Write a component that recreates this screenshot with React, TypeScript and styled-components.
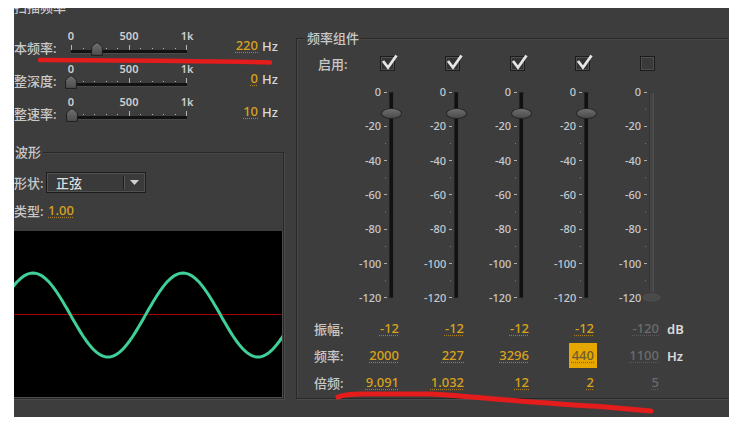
import React from 'react'
import styled, { createGlobalStyle } from 'styled-components'

const GlobalStyle = createGlobalStyle`
  * { box-sizing: border-box; }
  html, body { margin: 0; padding: 0; background: #fff; }
  body { font-family: "Noto Sans", "Noto Sans CJK SC", sans-serif; }
`

const PANEL = '#3d3d3d'
const ORANGE = '#d9a31c'

const Page = styled.div`
  position: relative;
  width: 735px;
  height: 425px;
  padding: 8px 0 0 14px;
`

const Panel = styled.div`
  width: 715px;
  height: 409px;
  background: ${PANEL};
  overflow: hidden;
  display: flex;
  color: #c8c8c8;
  font-size: 13px;
`

/* ---------- left column ---------- */

const LeftCol = styled.div`
  flex: none;
  width: 270px;
  display: flex;
  flex-direction: column;
`

const SectionTitle = styled.div`
  margin-top: -9px;
  height: 16px;
  line-height: 16px;
  font-weight: 500;
`

const SliderRows = styled.div`
  margin-top: 15px;
  display: flex;
  flex-direction: column;
  gap: 7px;
`

const SliderRow = styled.div`
  display: flex;
  align-items: flex-end;
  height: 26px;
`

const RowLabel = styled.div`
  flex: none;
  width: 57px;
  line-height: 16px;
  font-weight: 500;
  white-space: nowrap;
`

const HSlider = styled.div`
  position: relative;
  flex: none;
  width: 116px;
  height: 26px;
  display: flex;
  flex-direction: column;
`

const HScale = styled.div`
  height: 12px;
  display: flex;
  justify-content: space-between;
  font-size: 11px;
  line-height: 12px;
  font-weight: 600;
  color: #cfcfcf;
`

const HScaleMark = styled.span`
  width: 0;
  display: flex;
  justify-content: center;
  white-space: nowrap;
`

const HTicks = styled.div`
  height: 8px;
  display: flex;
  justify-content: space-between;
  align-items: flex-end;
`

const HTick = styled.span<{ $major: boolean }>`
  width: 1px;
  height: ${p => (p.$major ? 5 : 1)}px;
  margin-bottom: ${p => (p.$major ? 0 : 1)}px;
  background: #b4b4b4;
`

const HTrack = styled.div`
  height: 3px;
  background: #121212;
  box-shadow: 0 1px 0 #4a4a4a;
`

const HThumb = styled.svg`
  position: absolute;
  bottom: 0;
`

const ValueBox = styled.div`
  flex: none;
  width: 71px;
  margin-bottom: 2px;
  display: flex;
  justify-content: flex-end;
`

const Num = styled.span<{ $off?: boolean; $active?: boolean }>`
  color: ${p => (p.$active ? '#6e5d33' : p.$off ? '#6c6c6c' : ORANGE)};
  background: ${p => (p.$active ? '#e6a800' : 'transparent')};
  padding: ${p => (p.$active ? '4px 3px' : '0')};
  margin-right: ${p => (p.$active ? '-3px' : '0')};
  line-height: 17px;
  font-weight: 500;
  text-decoration-line: underline;
  text-decoration-style: dotted;
  text-decoration-color: ${p => (p.$off ? '#5a5a5a' : p.$active ? '#7a6a3a' : '#a57c1a')};
  text-underline-offset: 2px;
  white-space: nowrap;
`

const Unit = styled.span`
  margin: 0 0 2px 4px;
  line-height: 16px;
  color: #d8d8d8;
  font-weight: 500;
`

const Group = styled.div`
  border: 1px solid #282828;
  box-shadow: 1px 1px 0 #4b4b4b, inset 1px 1px 0 #474747;
  display: flex;
  flex-direction: column;
`

const GroupTitle = styled.div<{ $indent: number }>`
  align-self: flex-start;
  margin: -9px 0 0 ${p => p.$indent}px;
  padding: 0 2px;
  height: 16px;
  line-height: 16px;
  background: ${PANEL};
  font-weight: 500;
`

const WaveGroup = styled(Group)`
  margin: 30px 0 0 -2px;
  width: 272px;
  height: 247px;
`

const FormRow = styled.div<{ $h: number; $top: number }>`
  display: flex;
  align-items: center;
  height: ${p => p.$h}px;
  margin-top: ${p => p.$top}px;
`

const FormLabel = styled.div`
  flex: none;
  width: 33px;
  padding-left: 1px;
  font-weight: 500;
  white-space: nowrap;
`

const Select = styled.div`
  width: 100px;
  height: 21px;
  display: flex;
  align-items: center;
  background: #3a3a3a;
  border: 1px solid #1c1c1c;
  box-shadow: inset 0 0 0 1px #515151;
`

const SelectText = styled.span`
  flex: 1;
  padding-left: 9px;
  color: #dedede;
  font-weight: 500;
`

const SelectDivider = styled.span`
  width: 1px;
  height: 13px;
  background: #1e1e1e;
  box-shadow: 1px 0 0 #575757;
`

const SelectArrow = styled.span`
  width: 21px;
  display: flex;
  justify-content: center;
`

const TypeValue = styled.span`
  margin-left: 2px;
  display: flex;
`

const WaveDisplay = styled.div`
  flex: 1;
  margin-top: 13px;
  background: #000;
  border-right: 1px solid #4d4d4d;
  border-bottom: 1px solid #4d4d4d;
  overflow: hidden;
`

/* ---------- right group ---------- */

const CompGroup = styled(Group)`
  flex: 1;
  height: 361px;
  margin: 30px -20px 0 12px;
`

const Row = styled.div<{ $h: number; $top: number }>`
  display: flex;
  align-items: center;
  height: ${p => p.$h}px;
  margin-top: ${p => p.$top}px;
`

const LabelCell = styled.div<{ $indent: number }>`
  flex: none;
  width: 62px;
  padding-left: ${p => p.$indent}px;
  font-weight: 500;
  white-space: nowrap;
`

const Cell = styled.div`
  flex: none;
  width: 48px;
  display: flex;
  & + & { margin-left: 17px; }
`

const ValueCell = styled(Cell)`
  justify-content: flex-end;
  padding-right: 8px;
`

const UnitCell = styled.div`
  color: #dadada;
  font-weight: 600;
`

const Box = styled.span<{ $on: boolean }>`
  position: relative;
  margin-left: 21px;
  width: 15px;
  height: 15px;
  background: ${p => (p.$on ? '#333' : '#3a3a3a')};
  border: 1px solid #1c1c1c;
  box-shadow: inset 0 0 0 1px #505050;
`

const Check = styled.svg`
  position: absolute;
  left: -1px;
  top: -1px;
  overflow: visible;
`

const SliderCell = styled(Cell)`
  height: 218px;
  align-items: flex-start;
`

const VScale = styled.div`
  width: 28px;
  height: 218px;
  display: flex;
  flex-direction: column;
  justify-content: space-between;
  font-size: 11px;
  font-weight: 500;
  color: #c6cacf;
  background: linear-gradient(to bottom, transparent 17px, #7c7c7c 17px, #7c7c7c 18px, transparent 18px) 26px 6px / 1px 34.333px repeat-y;
`

const VMark = styled.div`
  height: 12px;
  line-height: 12px;
  display: flex;
  justify-content: flex-end;
  align-items: center;
  white-space: nowrap;
  &::after {
    content: '';
    width: 3px;
    height: 1px;
    margin-left: 3px;
    background: #b0b0b0;
  }
`

const VTrack = styled.div<{ $on: boolean }>`
  position: relative;
  margin: 6px 0 0 2px;
  width: 5px;
  height: 206px;
  background: ${p => (p.$on ? '#111' : '#454545')};
  border: 1px solid ${p => (p.$on ? '#222' : '#353535')};
  border-right-color: ${p => (p.$on ? '#3a3a3a' : '#505050')};
`

const VThumb = styled.div<{ $on: boolean }>`
  position: absolute;
  left: -9px;
  width: 21px;
  height: 11px;
  border-radius: 50%;
  background: ${p => (p.$on ? 'linear-gradient(#6e6e6e, #4a4a4a)' : '#4a4a4a')};
  border: 1px solid ${p => (p.$on ? '#262626' : '#3c3c3c')};
`

const Annotations = styled.svg`
  position: absolute;
  left: 0;
  top: 0;
  pointer-events: none;
`

interface Channel {
  on: boolean
  amp: number
  freq: string
  mult: string
  active?: boolean
}

const channels: Channel[] = [
  { on: true, amp: -12, freq: '2000', mult: '9.091' },
  { on: true, amp: -12, freq: '227', mult: '1.032' },
  { on: true, amp: -12, freq: '3296', mult: '12' },
  { on: true, amp: -12, freq: '440', mult: '2', active: true },
  { on: false, amp: -120, freq: '1100', mult: '5' },
]

const sweepRows = [
  { label: '本频率:', value: 220 },
  { label: '整深度:', value: 0 },
  { label: '整速率:', value: 10 },
]

const dbMarks = ['0', '-20', '-40', '-60', '-80', '-100', '-120']

const sinePath = () => {
  let d = ''
  for (let x = 0; x <= 272; x += 2) {
    const y = 84 - 42 * Math.cos((2 * Math.PI * (x - 20)) / 150)
    d += `${x === 0 ? 'M' : 'L'}${x} ${y.toFixed(2)} `
  }
  return d
}

const Slider = ({ value }: { value: number }) => (
  <HSlider>
    <HScale>
      <HScaleMark>0</HScaleMark>
      <HScaleMark>500</HScaleMark>
      <HScaleMark>1k</HScaleMark>
    </HScale>
    <HTicks>
      {Array.from({ length: 11 }, (_, i) => (
        <HTick key={i} $major={i % 5 === 0} />
      ))}
    </HTicks>
    <HTrack />
    <HThumb width="12" height="14" viewBox="0 0 12 14" style={{ left: (value / 1000) * 116 - 6 }}>
      <defs>
        <linearGradient id="thumbFill" x1="0" y1="0" x2="0" y2="1">
          <stop offset="0" stopColor="#707070" />
          <stop offset="1" stopColor="#4c4c4c" />
        </linearGradient>
      </defs>
      <path d="M6 0.6 C7 0.6 11.4 4.4 11.4 5.4 V13.4 H0.6 V5.4 C0.6 4.4 5 0.6 6 0.6 Z" fill="url(#thumbFill)" stroke="#1e1e1e" />
    </HThumb>
  </HSlider>
)

const App = () => (
  <Page>
    <GlobalStyle />
    <Panel>
      <LeftCol>
        <SectionTitle>扫描频率</SectionTitle>
        <SliderRows>
          {sweepRows.map(r => (
            <SliderRow key={r.label}>
              <RowLabel>{r.label}</RowLabel>
              <Slider value={r.value} />
              <ValueBox>
                <Num>{r.value}</Num>
              </ValueBox>
              <Unit>Hz</Unit>
            </SliderRow>
          ))}
        </SliderRows>

        <WaveGroup>
          <GroupTitle $indent={0}>波形</GroupTitle>
          <FormRow $h={21} $top={12}>
            <FormLabel>形状:</FormLabel>
            <Select>
              <SelectText>正弦</SelectText>
              <SelectDivider />
              <SelectArrow>
                <svg width="9" height="5" viewBox="0 0 9 5">
                  <path d="M0 0 H9 L4.5 5 Z" fill="#cfcfcf" />
                </svg>
              </SelectArrow>
            </Select>
          </FormRow>
          <FormRow $h={16} $top={9}>
            <FormLabel>类型:</FormLabel>
            <TypeValue>
              <Num>1.00</Num>
            </TypeValue>
          </FormRow>
          <WaveDisplay>
            <svg width="272" height="166" viewBox="0 0 272 166">
              <line x1="0" y1="83.5" x2="272" y2="83.5" stroke="#a30000" strokeWidth="1" />
              <path d={sinePath()} fill="none" stroke="#3fcf98" strokeWidth="3" strokeLinejoin="round" />
            </svg>
          </WaveDisplay>
        </WaveGroup>
      </LeftCol>

      <CompGroup>
        <GroupTitle $indent={8}>频率组件</GroupTitle>

        <Row $h={18} $top={8}>
          <LabelCell $indent={21}>启用:</LabelCell>
          {channels.map((c, i) => (
            <Cell key={i}>
              <Box $on={c.on}>
                {c.on && (
                  <Check width="17" height="15" viewBox="0 0 17 15">
                    <path d="M3 5 L8 11.5 L16.5 -0.5" fill="none" stroke="#e6e6e6" strokeWidth="2.8" />
                  </Check>
                )}
              </Box>
            </Cell>
          ))}
        </Row>

        <Row $h={218} $top={14}>
          <LabelCell $indent={17} />
          {channels.map((c, i) => (
            <SliderCell key={i}>
              <VScale>
                {dbMarks.map(m => (
                  <VMark key={m}>{m}</VMark>
                ))}
              </VScale>
              <VTrack $on={c.on}>
                <VThumb $on={c.on} style={{ top: (-c.amp / 120) * 204 - 5.5 }} />
              </VTrack>
            </SliderCell>
          ))}
        </Row>

        <Row $h={27} $top={11}>
          <LabelCell $indent={17}>振幅:</LabelCell>
          {channels.map((c, i) => (
            <ValueCell key={i}>
              <Num $off={!c.on}>{c.amp}</Num>
            </ValueCell>
          ))}
          <UnitCell>dB</UnitCell>
        </Row>
        <Row $h={27} $top={0}>
          <LabelCell $indent={17}>频率:</LabelCell>
          {channels.map((c, i) => (
            <ValueCell key={i}>
              <Num $off={!c.on} $active={c.active}>{c.freq}</Num>
            </ValueCell>
          ))}
          <UnitCell>Hz</UnitCell>
        </Row>
        <Row $h={27} $top={0}>
          <LabelCell $indent={17}>倍频:</LabelCell>
          {channels.map((c, i) => (
            <ValueCell key={i}>
              <Num $off={!c.on}>{c.mult}</Num>
            </ValueCell>
          ))}
        </Row>
      </CompGroup>
    </Panel>

    <Annotations width="735" height="425" viewBox="0 0 735 425">
      <path d="M40 60 C 110 60, 170 61, 220 61.5 S 262 62.5, 270 62.5" fill="none" stroke="#e51c1c" strokeWidth="4.5" strokeLinecap="round" />
      <path d="M338 397 Q 346 394, 362 394 L 430 394 C 470 396, 530 403, 600 406.5 L 651 411" fill="none" stroke="#e51c1c" strokeWidth="5" strokeLinecap="round" />
    </Annotations>
  </Page>
)

export default App
